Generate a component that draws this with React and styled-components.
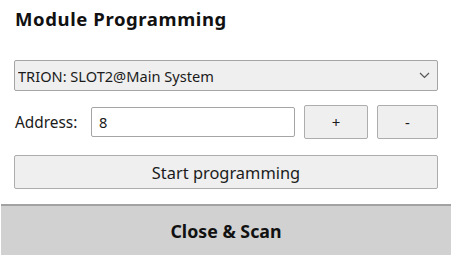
import styled, { createGlobalStyle } from 'styled-components';

const GlobalStyle = createGlobalStyle`
  body {
    margin: 0;
    background: #ffffff;
    font-family: 'Noto Sans', 'Open Sans', sans-serif;
    color: #1b1b1b;
  }
`;

const Panel = styled.div`
  width: 460px;
  height: 276px;
  display: flex;
  flex-direction: column;
`;

const Body = styled.div`
  padding: 9px 22px 0 14px;
  display: flex;
  flex-direction: column;
`;

const Title = styled.h2`
  margin: 0 0 0 1px;
  font-size: 18.5px;
  letter-spacing: 0.6px;
  line-height: 20px;
  font-weight: 700;
  color: #111;
`;

const SelectWrap = styled.div`
  position: relative;
  margin-top: 31px;
  height: 31px;
`;

const Select = styled.select`
  appearance: none;
  width: 100%;
  height: 100%;
  box-sizing: border-box;
  border: 1px solid #a5a5a5;
  border-radius: 2px;
  background: #efefef;
  font-family: inherit;
  font-size: 14.6px;
  color: #1b1b1b;
  padding: 0 30px 0 3px;
  outline: none;
`;

const Chevron = styled.svg`
  position: absolute;
  right: 8px;
  top: 12px;
  pointer-events: none;
`;

const Row = styled.div`
  display: flex;
  align-items: center;
  margin-top: 14px;
  height: 34px;
`;

const Label = styled.label`
  width: 77px;
  font-size: 15.4px;
  padding-left: 1px;
  box-sizing: border-box;
`;

const Field = styled.input`
  width: 204px;
  height: 30px;
  box-sizing: border-box;
  border: 1px solid #a5a5a5;
  border-radius: 2px;
  background: #fff;
  font-family: inherit;
  font-size: 14.6px;
  color: #1b1b1b;
  padding: 0 7px;
  outline: none;
`;

const Button = styled.button`
  width: ${(p) => p.$w || 64}px;
  height: 34px;
  margin-left: ${(p) => p.$gap || 0}px;
  box-sizing: border-box;
  border: 1px solid #adadad;
  border-radius: 2px;
  background: #efefef;
  font-family: inherit;
  font-size: ${(p) => p.$size || 15}px;
  color: #1b1b1b;
  padding: 0;
`;

const WideButton = styled(Button)`
  width: 424px;
  margin-top: 16px;
`;

const Footer = styled.div`
  margin: 15px 0 0 1px;
  width: 450px;
  height: 49px;
  border-top: 2px solid #a2a2a2;
  background: #d1d1d1;
  display: flex;
  align-items: center;
  justify-content: center;
  font-size: 17.8px;
  font-weight: 700;
  color: #111;
`;

export default function App() {
  return (
    <>
      <GlobalStyle />
      <Panel>
        <Body>
          <Title>Module Programming</Title>
          <SelectWrap>
            <Select defaultValue="slot2">
              <option value="slot2">TRION: SLOT2@Main System</option>
            </Select>
            <Chevron width="11" height="7" viewBox="0 0 11 7">
              <path d="M1 1l4.5 4.5L10 1" fill="none" stroke="#555" strokeWidth="1.2" />
            </Chevron>
          </SelectWrap>
          <Row>
            <Label>Address:</Label>
            <Field defaultValue="8" />
            <Button $gap={9}>+</Button>
            <Button $gap={9} $w={61}>-</Button>
          </Row>
          <WideButton $size={16.4}>Start programming</WideButton>
        </Body>
        <Footer>Close &amp; Scan</Footer>
      </Panel>
    </>
  );
}
